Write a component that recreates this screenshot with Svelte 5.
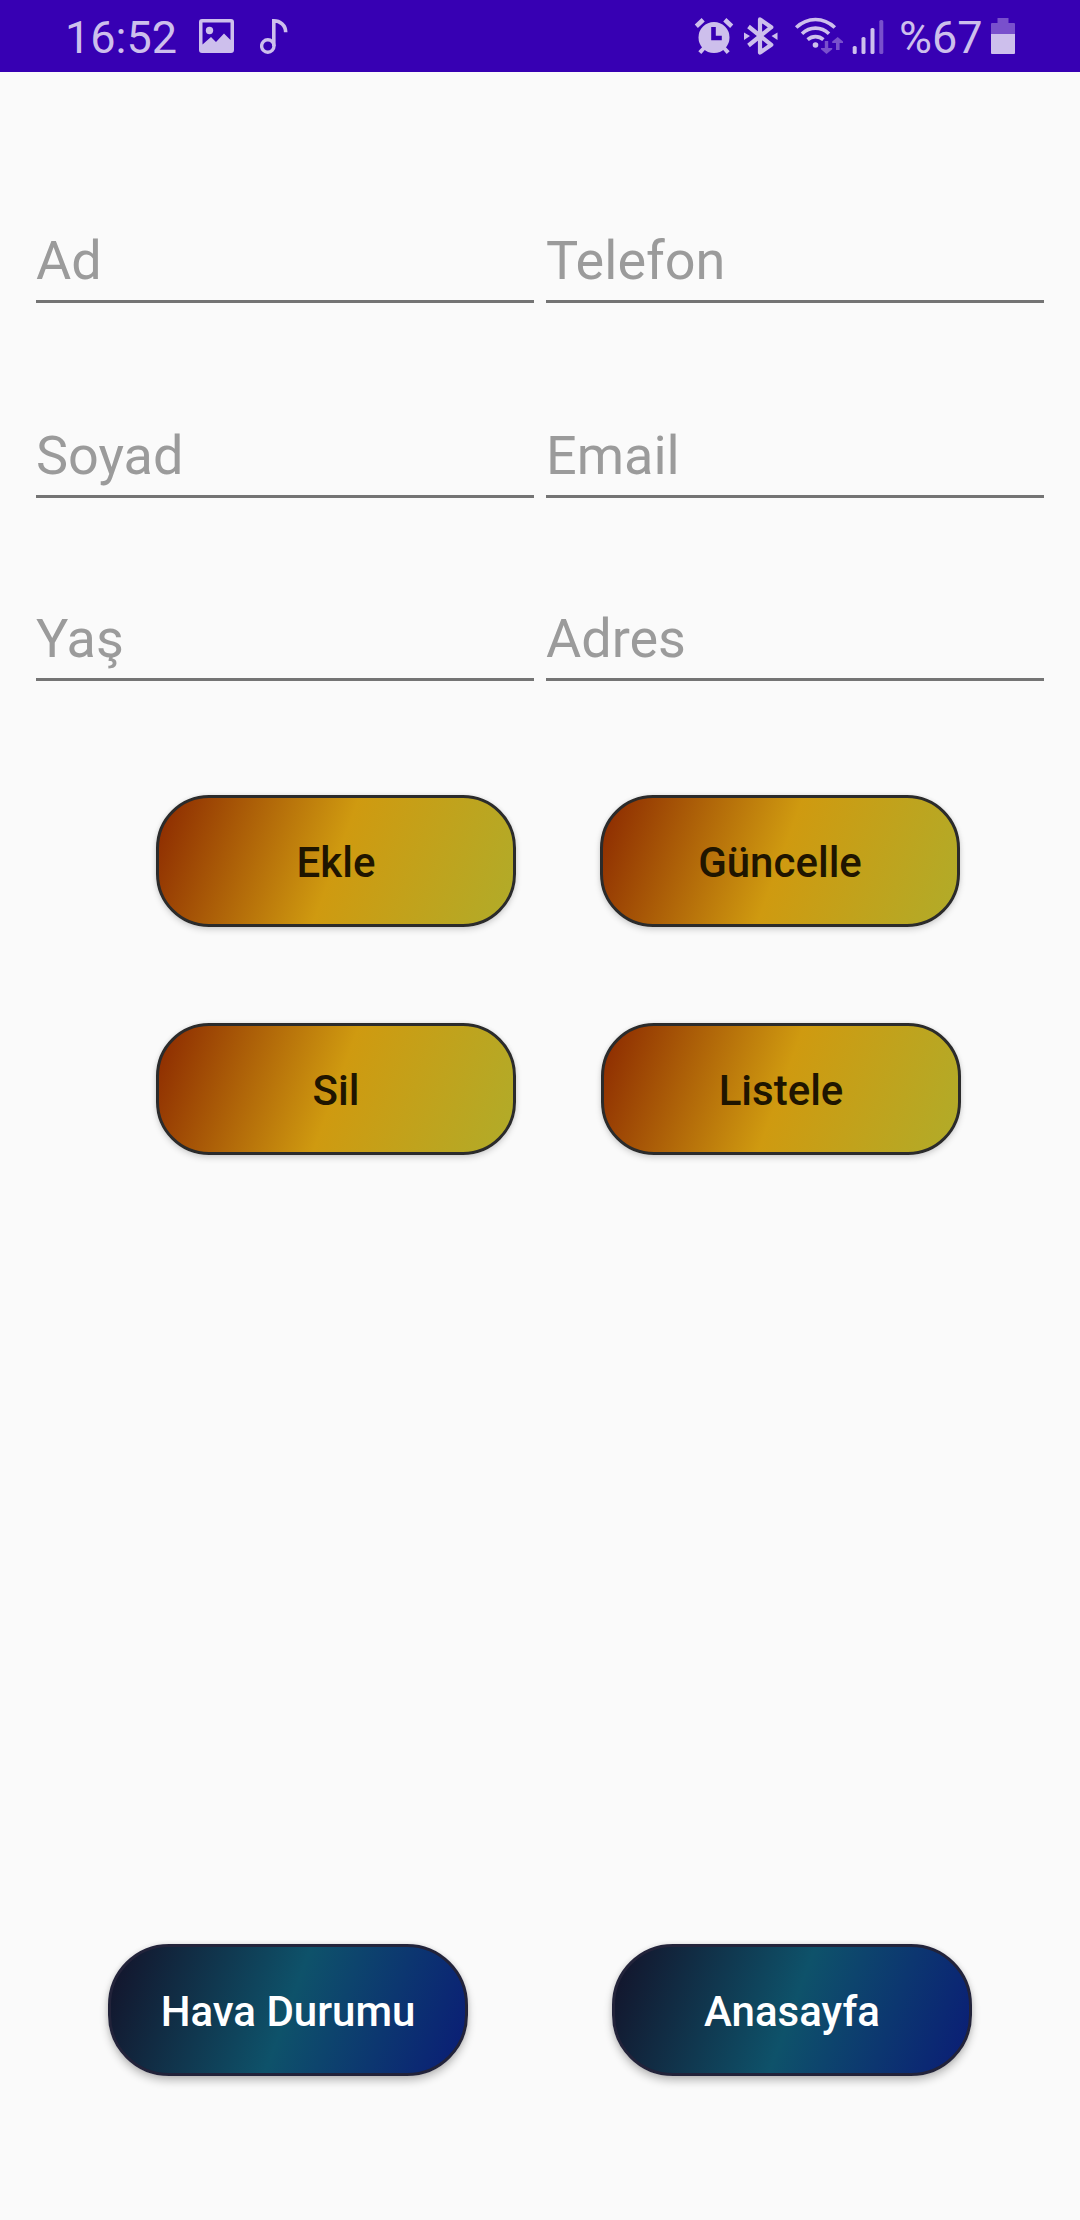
<script>
  const rows = [
    ['Ad', 'Telefon'],
    ['Soyad', 'Email'],
    ['Yaş', 'Adres'],
  ];
</script>

<main class="screen">
  <header class="status">
    <div class="left">
      <span class="time">16:52</span>
      <svg class="picture" width="36" height="72" viewBox="199 0 36 72">
        <path fill-rule="evenodd" d="M202 19h29a3 3 0 0 1 3 3v28a3 3 0 0 1-3 3h-29a3 3 0 0 1-3-3V22a3 3 0 0 1 3-3zM202.500 22.500V44.500L211 37L216 42L224 33.500L230.500 40V22.500z" />
        <circle cx="209.500" cy="30.500" r="3.700" />
      </svg>
      <svg class="note" width="30" height="72" viewBox="260 0 30 72">
        <circle cx="267.800" cy="46" r="6.200" class="stroke" stroke-width="3.400" />
        <path class="stroke" stroke-width="3.600" d="M273.800 46V20.800C280 20.800 285.700 25 285.700 32.300" />
      </svg>
    </div>
    <div class="right">
      <svg class="alarm" width="40" height="72" viewBox="694 0 40 72">
        <path fill-rule="evenodd" d="M714 22a15.500 15.500 0 1 1 0 31a15.500 15.500 0 1 1 0-31zM711.200 27v13.200h10.600v-4.400h-6V27z" />
        <path class="stroke" stroke-width="4.600" d="M696.300 26.200L703.200 19.800M731.700 26.200L724.800 19.800" />
        <path class="stroke" stroke-width="4" d="M704 48L699.800 52.600M724 48L728.200 52.600" />
      </svg>
      <svg class="bluetooth" width="34" height="72" viewBox="744 0 34 72">
        <path class="stroke" stroke-width="4.200" stroke-linejoin="round" d="M748.500 26.500L771.300 44.800L760 52.600V19.400L771.300 27.200L748.500 45.500" />
        <path d="M744 32.500L750 36L744 40zM777.500 32.500L771.500 36L777.500 40z" />
      </svg>
      <svg class="wifi" width="50" height="72" viewBox="794 0 50 72">
        <path class="stroke" stroke-width="3.600" d="M796.200 27.500C807.500 16.800 823.500 16.800 834.800 27.500M802 33.700C809.800 26.300 821.200 26.300 829 33.700M807.600 39.600C812.300 35.600 818.700 35.600 823.400 39.600" />
        <circle cx="815.500" cy="45" r="2.800" />
        <g class="dim">
          <path d="M824.800 41h3.400v7h4v1.200l-5.700 4.800l-5.500-4.800V48h3.800zM836 50h3.600v-7h3.400v-1.500l-5.300-4.500l-5.500 4.500V43h3.800z" />
        </g>
      </svg>
      <svg class="signal" width="33" height="72" viewBox="852 0 33 72">
        <rect x="852.700" y="46" width="4" height="8" rx="1.600" />
        <rect x="861.500" y="37" width="4" height="17" rx="1.600" />
        <rect x="870.500" y="28" width="4" height="26" rx="1.600" />
        <rect class="dim" x="879.300" y="20" width="4" height="34" rx="1.600" />
      </svg>
      <span class="percent">%67</span>
      <svg class="battery" width="24" height="72" viewBox="991 0 24 72">
        <path class="dim" d="M997.500 18h11v5h5.500a1 1 0 0 1 1 1v10h-24V24a1 1 0 0 1 1-1h5.500z" />
        <path d="M991 34h24v19a1 1 0 0 1-1 1h-22a1 1 0 0 1-1-1z" />
      </svg>
    </div>
  </header>

  <section class="form">
    {#each rows as row}
      <div class="row">
        {#each row as hint}
          <div class="field"><span>{hint}</span></div>
        {/each}
      </div>
    {/each}
  </section>

  <section class="actions">
    <div class="pair">
      <button>Ekle</button>
      <button>Güncelle</button>
    </div>
    <div class="pair second">
      <button>Sil</button>
      <button>Listele</button>
    </div>
  </section>

  <nav class="links">
    <button>Hava Durumu</button>
    <button>Anasayfa</button>
  </nav>
</main>

<style>
  :global(body) {
    margin: 0;
    background: #fafafa;
  }
  .screen {
    width: 1080px;
    height: 2220px;
    box-sizing: border-box;
    display: flex;
    flex-direction: column;
    background: #fafafa;
    font-family: Roboto, 'Liberation Sans', sans-serif;
    overflow: hidden;
  }
  .status {
    height: 72px;
    flex: none;
    display: flex;
    justify-content: space-between;
    padding: 0 65px;
    background: #3700b3;
    color: #cdbfec;
    font-size: 45px;
    line-height: 75px;
  }
  .left,
  .right {
    display: flex;
    height: 72px;
  }
  svg {
    display: block;
    flex: none;
    fill: #cdbfec;
  }
  .stroke {
    fill: none;
    stroke: #cdbfec;
  }
  .dim {
    fill: #7950cc;
  }
  .time {
    width: 134px;
  }
  .note {
    margin-left: 25px;
  }
  .bluetooth {
    margin-left: 10px;
  }
  .wifi {
    margin-left: 16px;
  }
  .signal {
    margin-left: 8px;
  }
  .percent {
    width: 92px;
    margin-left: 14px;
  }
  .form {
    padding: 0 36px;
    margin-top: 138px;
  }
  .row {
    display: grid;
    grid-template-columns: 498px 498px;
    gap: 12px;
    height: 93px;
  }
  .row:nth-child(2) {
    margin-top: 102px;
  }
  .row:nth-child(3) {
    margin-top: 90px;
  }
  .field {
    box-sizing: border-box;
    border-bottom: 3px solid #747474;
    padding-top: 19px;
    font-size: 54px;
    line-height: 64px;
    color: #9b9b9b;
  }
  button {
    width: 360px;
    height: 132px;
    box-sizing: border-box;
    border: 3px solid #2b2b2b;
    border-radius: 53px;
    padding: 4px 0 0;
    font: 500 42px/50px Roboto, 'Liberation Sans', sans-serif;
    color: #1f1500;
    background: linear-gradient(110.1deg, #8a2600, #cf9a10 50%, #b0ac2a) border-box;
    box-shadow: 0 3px 6px rgba(0, 0, 0, 0.15), 0 0 4px rgba(0, 0, 0, 0.08);
  }
  .actions {
    margin-top: 114px;
    padding-left: 156px;
  }
  .pair {
    display: flex;
    gap: 84px;
  }
  .second {
    margin-top: 96px;
    gap: 85px;
  }
  .links {
    display: flex;
    gap: 144px;
    margin: auto 0 144px;
    padding-left: 108px;
  }
  .links button {
    border-color: #22233a;
    border-radius: 61px;
    color: #fff;
    background: linear-gradient(110.1deg, #131128, #0e526a 50%, #0a1b76) border-box;
    box-shadow: 0 5px 9px rgba(0, 0, 0, 0.24), 0 0 5px rgba(0, 0, 0, 0.1);
  }
</style>
